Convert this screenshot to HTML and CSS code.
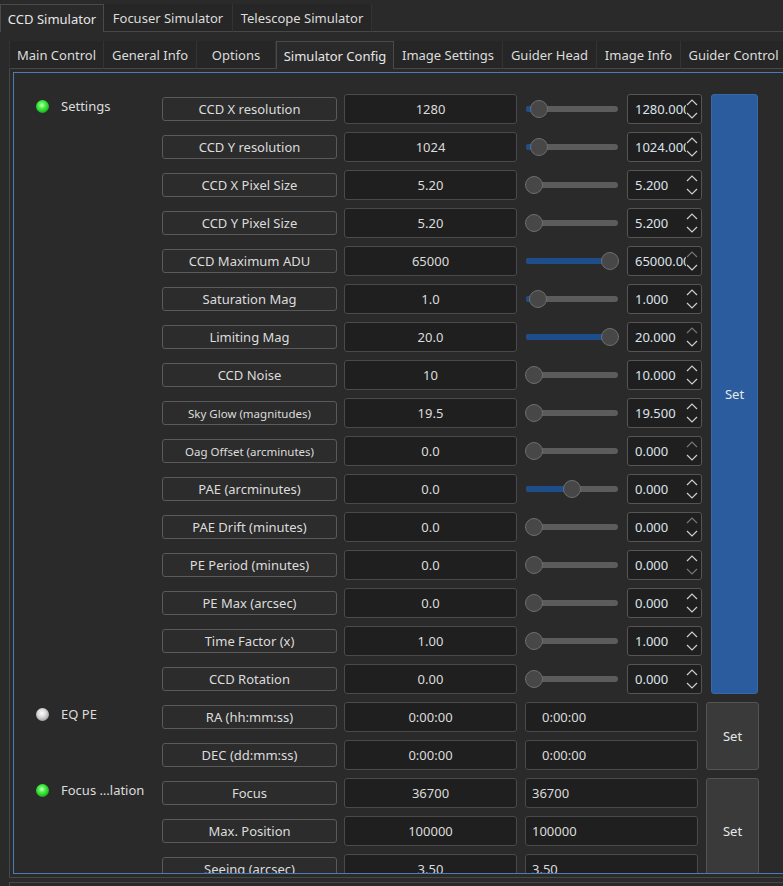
FILE: index.html
```html
<!DOCTYPE html>
<html>
<head>
<meta charset="utf-8">
<link rel="stylesheet" href="styles.css">
</head>
<body>
<div class="tabbar top">
  <div class="tab sel" style="width:104px">CCD Simulator</div>
  <div class="tab" style="width:129px">Focuser Simulator</div>
  <div class="tab" style="width:139px">Telescope Simulator</div>
  <div class="fill"></div>
</div>
<div class="outer">
  <div class="tabbar inner">
    <div class="tab first" style="width:95px">Main Control</div>
    <div class="tab" style="width:93px">General Info</div>
    <div class="tab" style="width:79px">Options</div>
    <div class="tab sel" style="width:118px">Simulator Config</div>
    <div class="tab" style="width:109px">Image Settings</div>
    <div class="tab" style="width:94px">Guider Head</div>
    <div class="tab" style="width:84px">Image Info</div>
    <div class="tab" style="width:106px">Guider Control</div>
    <div class="fill"></div>
  </div>
  <div class="pane">
    <div class="frame">
      <div class="group">
        <div class="ghead"><span class="led green"></span><span>Settings</span></div>
        <div class="rows">
          <div class="row"><div class="lbl">CCD X resolution</div><div class="val">1280</div><div class="slider"><div class="groove"><div class="blue" style="width:13px"></div></div><div class="handle" style="left:5px"></div></div><div class="spin"><span class="txt">1280.000</span><span class="arr"><svg width="12" height="22" viewBox="0 0 12 22"><polyline points="1,7 6,2 11,7"/><polyline class="dn" points="1,15 6,20 11,15"/></svg></span></div></div>
          <div class="row"><div class="lbl">CCD Y resolution</div><div class="val">1024</div><div class="slider"><div class="groove"><div class="blue" style="width:13px"></div></div><div class="handle" style="left:5px"></div></div><div class="spin"><span class="txt">1024.000</span><span class="arr"><svg width="12" height="22" viewBox="0 0 12 22"><polyline points="1,7 6,2 11,7"/><polyline class="dn" points="1,15 6,20 11,15"/></svg></span></div></div>
          <div class="row"><div class="lbl">CCD X Pixel Size</div><div class="val">5.20</div><div class="slider"><div class="groove"></div><div class="handle" style="left:0px"></div></div><div class="spin"><span class="txt">5.200</span><span class="arr"><svg width="12" height="22" viewBox="0 0 12 22"><polyline points="1,7 6,2 11,7"/><polyline class="dn" points="1,15 6,20 11,15"/></svg></span></div></div>
          <div class="row"><div class="lbl">CCD Y Pixel Size</div><div class="val">5.20</div><div class="slider"><div class="groove"></div><div class="handle" style="left:0px"></div></div><div class="spin"><span class="txt">5.200</span><span class="arr"><svg width="12" height="22" viewBox="0 0 12 22"><polyline points="1,7 6,2 11,7"/><polyline class="dn" points="1,15 6,20 11,15"/></svg></span></div></div>
          <div class="row"><div class="lbl">CCD Maximum ADU</div><div class="val">65000</div><div class="slider"><div class="groove"><div class="blue" style="width:84px"></div></div><div class="handle" style="left:76px"></div></div><div class="spin"><span class="txt">65000.000</span><span class="arr"><svg width="12" height="22" viewBox="0 0 12 22"><polyline class="dim" points="1,7 6,2 11,7"/><polyline class="dn" points="1,15 6,20 11,15"/></svg></span></div></div>
          <div class="row"><div class="lbl">Saturation Mag</div><div class="val">1.0</div><div class="slider"><div class="groove"><div class="blue" style="width:12px"></div></div><div class="handle" style="left:4px"></div></div><div class="spin"><span class="txt">1.000</span><span class="arr"><svg width="12" height="22" viewBox="0 0 12 22"><polyline points="1,7 6,2 11,7"/><polyline class="dn" points="1,15 6,20 11,15"/></svg></span></div></div>
          <div class="row"><div class="lbl">Limiting Mag</div><div class="val">20.0</div><div class="slider"><div class="groove"><div class="blue" style="width:84px"></div></div><div class="handle" style="left:76px"></div></div><div class="spin"><span class="txt">20.000</span><span class="arr"><svg width="12" height="22" viewBox="0 0 12 22"><polyline class="dim" points="1,7 6,2 11,7"/><polyline class="dn" points="1,15 6,20 11,15"/></svg></span></div></div>
          <div class="row"><div class="lbl">CCD Noise</div><div class="val">10</div><div class="slider"><div class="groove"></div><div class="handle" style="left:0px"></div></div><div class="spin"><span class="txt">10.000</span><span class="arr"><svg width="12" height="22" viewBox="0 0 12 22"><polyline points="1,7 6,2 11,7"/><polyline class="dn" points="1,15 6,20 11,15"/></svg></span></div></div>
          <div class="row"><div class="lbl small">Sky Glow (magnitudes)</div><div class="val">19.5</div><div class="slider"><div class="groove"></div><div class="handle" style="left:0px"></div></div><div class="spin"><span class="txt">19.500</span><span class="arr"><svg width="12" height="22" viewBox="0 0 12 22"><polyline points="1,7 6,2 11,7"/><polyline class="dn" points="1,15 6,20 11,15"/></svg></span></div></div>
          <div class="row"><div class="lbl small">Oag Offset (arcminutes)</div><div class="val">0.0</div><div class="slider"><div class="groove"></div><div class="handle" style="left:0px"></div></div><div class="spin"><span class="txt">0.000</span><span class="arr"><svg width="12" height="22" viewBox="0 0 12 22"><polyline class="dim" points="1,7 6,2 11,7"/><polyline class="dn" points="1,15 6,20 11,15"/></svg></span></div></div>
          <div class="row"><div class="lbl">PAE (arcminutes)</div><div class="val">0.0</div><div class="slider"><div class="groove"><div class="blue" style="width:46px"></div></div><div class="handle" style="left:38px"></div></div><div class="spin"><span class="txt">0.000</span><span class="arr"><svg width="12" height="22" viewBox="0 0 12 22"><polyline points="1,7 6,2 11,7"/><polyline class="dn" points="1,15 6,20 11,15"/></svg></span></div></div>
          <div class="row"><div class="lbl">PAE Drift (minutes)</div><div class="val">0.0</div><div class="slider"><div class="groove"></div><div class="handle" style="left:0px"></div></div><div class="spin"><span class="txt">0.000</span><span class="arr"><svg width="12" height="22" viewBox="0 0 12 22"><polyline class="dim" points="1,7 6,2 11,7"/><polyline class="dn" points="1,15 6,20 11,15"/></svg></span></div></div>
          <div class="row"><div class="lbl">PE Period (minutes)</div><div class="val">0.0</div><div class="slider"><div class="groove"></div><div class="handle" style="left:0px"></div></div><div class="spin"><span class="txt">0.000</span><span class="arr"><svg width="12" height="22" viewBox="0 0 12 22"><polyline points="1,7 6,2 11,7"/><polyline class="dn dim" points="1,15 6,20 11,15"/></svg></span></div></div>
          <div class="row"><div class="lbl">PE Max (arcsec)</div><div class="val">0.0</div><div class="slider"><div class="groove"></div><div class="handle" style="left:0px"></div></div><div class="spin"><span class="txt">0.000</span><span class="arr"><svg width="12" height="22" viewBox="0 0 12 22"><polyline points="1,7 6,2 11,7"/><polyline class="dn" points="1,15 6,20 11,15"/></svg></span></div></div>
          <div class="row"><div class="lbl">Time Factor (x)</div><div class="val">1.00</div><div class="slider"><div class="groove"></div><div class="handle" style="left:0px"></div></div><div class="spin"><span class="txt">1.000</span><span class="arr"><svg width="12" height="22" viewBox="0 0 12 22"><polyline points="1,7 6,2 11,7"/><polyline class="dn" points="1,15 6,20 11,15"/></svg></span></div></div>
          <div class="row"><div class="lbl">CCD Rotation</div><div class="val">0.00</div><div class="slider"><div class="groove"></div><div class="handle" style="left:0px"></div></div><div class="spin"><span class="txt">0.000</span><span class="arr"><svg width="12" height="22" viewBox="0 0 12 22"><polyline points="1,7 6,2 11,7"/><polyline class="dn" points="1,15 6,20 11,15"/></svg></span></div></div>
        </div>
        <div class="set blueset">Set</div>
      </div>

      <div class="group">
        <div class="ghead"><span class="led gray"></span><span>EQ PE</span></div>
        <div class="rows">
          <div class="row"><div class="lbl">RA (hh:mm:ss)</div><div class="val">0:00:00</div><div class="edit ra">0:00:00</div></div>
          <div class="row"><div class="lbl">DEC (dd:mm:ss)</div><div class="val">0:00:00</div><div class="edit ra">0:00:00</div></div>
        </div>
        <div class="set grayset">Set</div>
      </div>

      <div class="group">
        <div class="ghead"><span class="led green"></span><span>Focus …lation</span></div>
        <div class="rows">
          <div class="row"><div class="lbl">Focus</div><div class="val">36700</div><div class="edit">36700</div></div>
          <div class="row"><div class="lbl">Max. Position</div><div class="val">100000</div><div class="edit">100000</div></div>
          <div class="row"><div class="lbl">Seeing (arcsec)</div><div class="val">3.50</div><div class="edit">3.50</div></div>
        </div>
        <div class="set grayset">Set</div>
      </div>
    </div>
  </div>
  <div class="bottom"></div>
</div>
</body>
</html>
```
FILE: styles.css
```css
* { box-sizing: border-box; }
html, body { margin: 0; padding: 0; }
body {
  width: 783px;
  height: 886px;
  overflow: hidden;
  background: #2a2a2a;
  font-family: "Noto Sans", "DejaVu Sans", sans-serif;
  font-size: 13px;
  color: #dcdcdc;
}

.tabbar { display: flex; align-items: flex-end; }
.tabbar.top { height: 32px; padding-top: 4px; }
.tabbar.inner { height: 28px; width: 820px; }
.tab {
  height: 28px;
  flex: none;
  display: flex;
  align-items: center;
  justify-content: center;
  background: #262626;
  border-right: 1px solid #333;
  border-bottom: 1px solid #474747;
  white-space: nowrap;
  padding-top: 1px;
}
.tab.first { border-left: 1px solid #333; }
.tab.sel {
  background: #2a2a2a;
  border: 1px solid #4a4a4a;
  border-bottom: none;
  color: #e6e6e6;
  padding-top: 0;
}
.fill { flex: 1; height: 28px; border-bottom: 1px solid #474747; }

.outer { padding: 9px 0 0 9px; }
.pane {
  width: 820px;
  height: 809px;
  padding: 3px 0 3px 3px;
  border-left: 1px solid #474747;
  border-bottom: 1px solid #474747;
}
.frame {
  height: 802px;
  border: 1px solid #4b7cb6;
  padding-top: 21px;
  overflow: hidden;
}

.group { display: flex; margin-bottom: 8px; }
.ghead {
  width: 148px;
  height: 24px;
  flex: none;
  align-self: flex-start;
  display: flex;
  align-items: center;
  padding-left: 22px;
  gap: 12px;
  white-space: nowrap;
}
.led {
  width: 13px;
  height: 13px;
  border-radius: 50%;
  flex: none;
}
.led.green {
  background: radial-gradient(circle at 45% 40%, #c8ffc0 0, #4cf24c 30%, #22c322 62%, #1a5e1a 92%, #203020 100%);
}
.led.gray {
  background: radial-gradient(circle at 45% 40%, #ffffff 0, #dcdcdc 35%, #a8a8a8 70%, #555 95%, #333 100%);
}

.rows { display: flex; flex-direction: column; gap: 8px; }
.row { display: flex; align-items: center; height: 30px; }

.lbl {
  width: 175px;
  height: 24px;
  margin-right: 7px;
  flex: none;
  display: flex;
  align-items: center;
  justify-content: center;
  background: #2c2c2c;
  border: 1px solid #5a5a5a;
  border-radius: 3px;
  white-space: nowrap;
}
.lbl.small { font-size: 11.5px; }

.val {
  width: 173px;
  height: 30px;
  flex: none;
  display: flex;
  align-items: center;
  justify-content: center;
  background: #1f1f1f;
  border: 1px solid #4a4a4a;
  border-radius: 3px;
}

.slider {
  width: 94px;
  height: 18px;
  margin: 0 8px;
  flex: none;
  position: relative;
  display: flex;
  align-items: center;
  padding: 0 1px;
}
.groove {
  width: 100%;
  height: 6px;
  border-radius: 3px;
  background: #5c5c5c;
  overflow: hidden;
}
.blue { height: 6px; background: #1e4d8c; }
.handle {
  position: absolute;
  top: 0;
  width: 18px;
  height: 18px;
  border-radius: 50%;
  background: #474747;
  border: 1px solid #6e6e6e;
}

.spin {
  width: 75px;
  height: 30px;
  flex: none;
  display: flex;
  align-items: center;
  padding-left: 7px;
  background: #1f1f1f;
  border: 1px solid #555;
  border-radius: 3px;
}
.txt { width: 51px; overflow: hidden; white-space: nowrap; flex: none; color: #dde3ea; }
.arr { display: flex; flex: none; }
.arr svg polyline { fill: none; stroke: #cfcfcf; stroke-width: 1.2; }
.arr svg polyline.dim { stroke: #777; }

.edit {
  width: 173px;
  height: 30px;
  margin-left: 8px;
  flex: none;
  display: flex;
  align-items: center;
  padding-left: 6px;
  background: #1f1f1f;
  border: 1px solid #4a4a4a;
  border-radius: 3px;
}
.edit.ra { padding-left: 16px; }

.set {
  flex: none;
  display: flex;
  align-items: center;
  justify-content: center;
  border-radius: 3px;
  color: #e8e8e8;
}
.blueset {
  width: 47px;
  margin-left: 9px;
  background: #2a5c9e;
  border: 1px solid #3669aa;
}
.grayset {
  width: 53px;
  margin-left: 8px;
  background: #3a3a3a;
  border: 1px solid #555;
}

.bottom {
  margin-top: 4px;
  height: 10px;
  border-top: 1px solid #474747;
  border-left: 1px solid #474747;
}
```
